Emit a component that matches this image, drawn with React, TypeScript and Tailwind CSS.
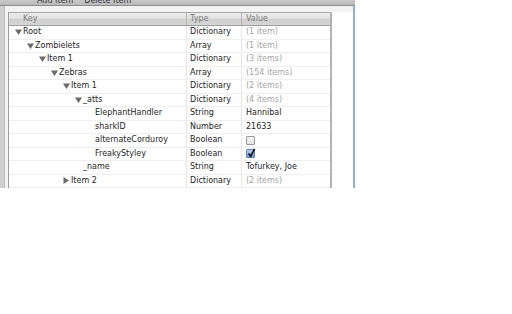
import React from "react";

type Row = {
  key: string;
  level: number;
  tri?: "down" | "right";
  type: string;
  value?: string;
  placeholder?: boolean;
  check?: "on" | "off";
};

const rows: Row[] = [
  { key: "Root", level: 0, tri: "down", type: "Dictionary", value: "(1 item)", placeholder: true },
  { key: "Zombielets", level: 1, tri: "down", type: "Array", value: "(1 item)", placeholder: true },
  { key: "Item 1", level: 2, tri: "down", type: "Dictionary", value: "(3 items)", placeholder: true },
  { key: "Zebras", level: 3, tri: "down", type: "Array", value: "(154 items)", placeholder: true },
  { key: "Item 1", level: 4, tri: "down", type: "Dictionary", value: "(2 items)", placeholder: true },
  { key: "_atts", level: 5, tri: "down", type: "Dictionary", value: "(4 items)", placeholder: true },
  { key: "ElephantHandler", level: 6, type: "String", value: "Hannibal" },
  { key: "sharkID", level: 6, type: "Number", value: "21633" },
  { key: "alternateCorduroy", level: 6, type: "Boolean", check: "off" },
  { key: "FreakyStyley", level: 6, type: "Boolean", check: "on" },
  { key: "_name", level: 5, type: "String", value: "Tofurkey, Joe" },
  { key: "Item 2", level: 4, tri: "right", type: "Dictionary", value: "(2 items)", placeholder: true },
];

function Tri({ dir }: { dir: "down" | "right" }) {
  return dir === "down" ? (
    <svg width="7" height="6" viewBox="0 0 7 6" className="shrink-0">
      <path d="M0 0.5 L7 0.5 L3.5 6 Z" fill="#6b6b6b" />
    </svg>
  ) : (
    <svg width="6" height="7" viewBox="0 0 6 7" className="shrink-0">
      <path d="M0.5 0 L6 3.5 L0.5 7 Z" fill="#6b6b6b" />
    </svg>
  );
}

function Check({ on }: { on: boolean }) {
  if (!on)
    return (
      <div className="w-[9px] h-[9px] rounded-[1px] border border-[#9a9a9a] bg-gradient-to-b from-[#f4f4f4] to-[#e2e2e2]" />
    );
  return (
    <div className="relative w-[9px] h-[9px] rounded-[1px] border border-[#5b84c0] bg-gradient-to-b from-[#b9d2f0] to-[#6f9ed8]">
      <svg width="9" height="10" viewBox="0 0 9 10" className="absolute left-[-0.5px] top-[-2px]">
        <path d="M1.5 5.5 L3.7 8.3 L7.6 0.8" fill="none" stroke="#111" strokeWidth="1.7" />
      </svg>
    </div>
  );
}

export default function App() {
  return (
    <div
      className="w-[512px] h-[314px] bg-white overflow-hidden"
      style={{ fontFamily: '"DejaVu Sans", sans-serif' }}
    >
      <div className="w-[355px] flex flex-col">
        {/* toolbar strip */}
        <div className="h-[6px] bg-gradient-to-b from-[#c9c9c9] to-[#b9b9b9] border-b border-[#8e8e8e] overflow-hidden flex items-end gap-[11px] pl-[37px]">
          <span className="text-[8px] leading-[10px] text-[#333] mb-[-1px]">Add Item</span>
          <span className="text-[8px] leading-[10px] text-[#333] mb-[-1px]">Delete Item</span>
        </div>
        <div className="flex h-[182px]">
          <div className="w-[5px] bg-[#cfcfcf] border-r border-[#bdbdbd]" />
          <div className="flex-1 bg-[#f3f3f3] pl-[3px] pt-[6px] flex">
            <div className="w-[324px] bg-white border-l border-[#9d9d9d] border-r-2 border-r-[#b3b3b3] flex flex-col">
              {/* header */}
              <div className="h-[14px] flex border-t border-[#a8a8a8] border-b border-b-[#9e9e9e] bg-[linear-gradient(#ececec_0%,#e2e2e2_45%,#cfcfcf_50%,#d6d6d6_100%)] text-[8px] text-[#7a7a7a]">
                <div className="w-[178px] pl-[14px] flex items-center border-r border-[#b5b5b5]">Key</div>
                <div className="w-[55px] pl-[3px] flex items-center border-r border-[#b5b5b5]">Type</div>
                <div className="flex-1 pl-[4px] flex items-center">Value</div>
              </div>
              {rows.map((r, i) => (
                <div
                  key={i}
                  className="h-[13.5px] flex border-b border-[#efefef] text-[8px] text-[#1e1e1e] leading-none"
                >
                  <div className="w-[178px] flex items-center border-r border-[#e6e6e6]" style={{ paddingLeft: 6 + r.level * 12 }}>
                    <div className="w-[8px] flex items-center">{r.tri ? <Tri dir={r.tri} /> : null}</div>
                    <span>{r.key}</span>
                  </div>
                  <div className="w-[55px] pl-[3px] flex items-center border-r border-[#e6e6e6]">{r.type}</div>
                  <div className="flex-1 pl-[4px] flex items-center">
                    {r.check ? (
                      <Check on={r.check === "on"} />
                    ) : (
                      <span className={r.placeholder ? "text-[#a5a5a5]" : ""}>{r.value}</span>
                    )}
                  </div>
                </div>
              ))}
            </div>
            <div className="flex-1 bg-white" />
          </div>
          <div className="w-[2px] bg-[#8fb1de]" />
        </div>
      </div>
    </div>
  );
}
